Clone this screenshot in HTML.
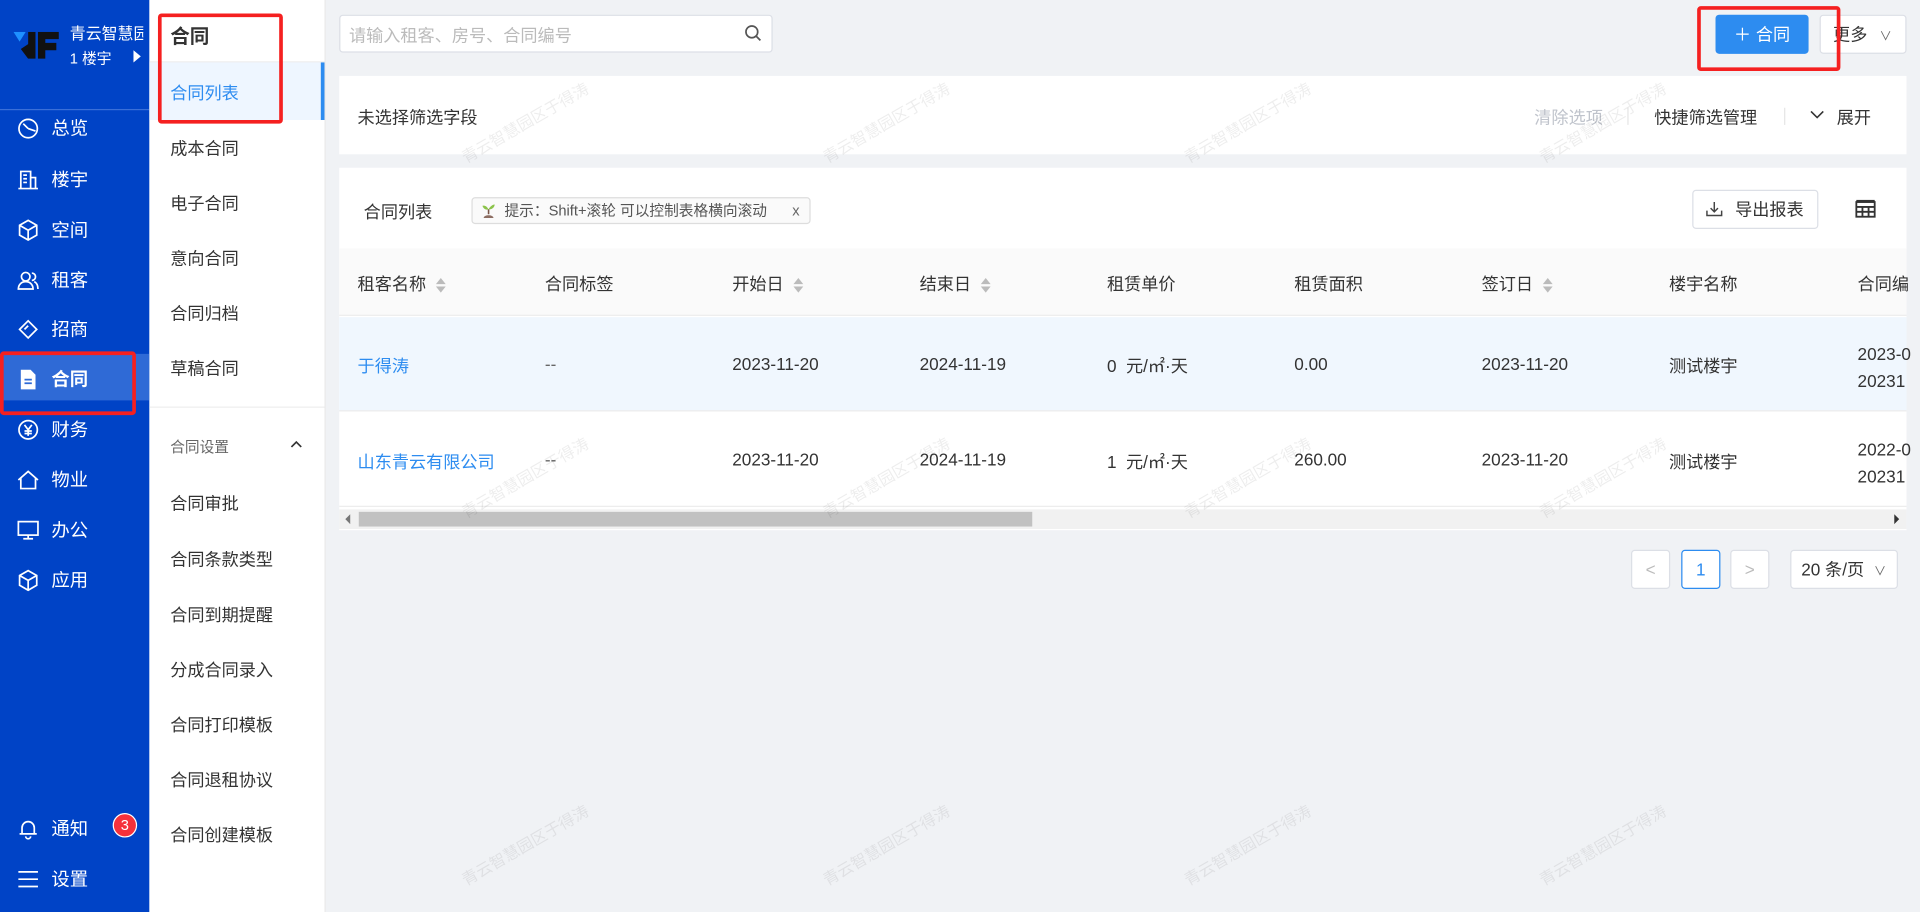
<!DOCTYPE html>
<html><head><meta charset="utf-8"><style>
*{box-sizing:border-box;margin:0;padding:0}
html,body{width:1920px;height:912px;overflow:hidden;background:#f0f2f5}
body{font-family:"Liberation Sans","Noto Sans CJK SC",sans-serif;color:#333}
#w{position:absolute;left:0;top:0;width:1568px;height:745px;transform:scale(1.22449);transform-origin:0 0;font-size:14px}
.a{position:absolute}
.side{left:0;top:0;width:122px;height:745px;background:#0043c6;color:#fff}
.mi{position:absolute;left:14px;font-size:15px;display:flex;align-items:center;gap:10px}
.mi svg{width:18px;height:18px}
.sub{left:122px;top:0;width:144px;height:745px;background:#fff;border-right:1px solid #e8e8e8}
.si{position:absolute;left:17px;font-size:14px;color:#333}
.card{background:#fff}
.th{position:absolute;top:222px;font-size:14px;color:#333}
.td{position:absolute;font-size:14px;color:#333}
.sort{display:inline-block;vertical-align:middle;margin-left:8px;width:8px;height:12px;position:relative}
.sort:before,.sort:after{content:"";position:absolute;left:0;border-left:4px solid transparent;border-right:4px solid transparent}
.sort:before{top:0;border-bottom:5px solid #bbb}
.sort:after{bottom:0;border-top:5px solid #bbb}
.red{position:absolute;border:3px solid #f52020;border-radius:3px}
.wm{position:absolute;color:rgba(0,0,0,0.07);font-size:13px;transform:rotate(-30deg);white-space:nowrap}
.pg{position:absolute;top:449px;height:32px;border:1px solid #dcdfe6;border-radius:3px;background:#fff;display:flex;align-items:center;justify-content:center;color:#bbb}
</style></head><body><div id="w">
<div class="a side">
  <svg class="a" style="left:11px;top:26px" width="38" height="22" viewBox="0 0 38 22"><path d="M0 0h10l-5 8z" fill="#1e90ff"/><path d="M12 0h6v22h-6l-6-8 6-4z" fill="#111"/><path d="M20 0h17v6h-11v3h9v6h-9v7h-6z" fill="#111"/></svg>
  <div class="a" style="left:57px;top:17px;font-size:13px;white-space:nowrap;width:60px;overflow:hidden">青云智慧园</div>
  <div class="a" style="left:57px;top:39px;font-size:12px">1 楼宇</div>
  <div class="a" style="left:109px;top:41px;border-left:6px solid #fff;border-top:5px solid transparent;border-bottom:5px solid transparent"></div>
  <div class="a" style="left:0;top:89px;width:122px;height:1px;background:#3a6fd8"></div>
  <div class="a" style="left:0;top:289px;width:122px;height:38px;background:#2f6ad6"></div>
  <div class="mi" style="top:94px"><svg viewBox="0 0 18 18" fill="none" stroke="#fff" stroke-width="1.4"><circle cx="9" cy="9" r="7.5"/><path d="M9 9l-4-4M9 9l6 2"/></svg>总览</div>
  <div class="mi" style="top:136px"><svg viewBox="0 0 18 18" fill="none" stroke="#fff" stroke-width="1.4"><path d="M3 16V2h8v14M11 7h4v9M1 16h16M5 5h3M5 8h3M5 11h3"/></svg>楼宇</div>
  <div class="mi" style="top:177px"><svg viewBox="0 0 18 18" fill="none" stroke="#fff" stroke-width="1.4"><path d="M9 1l7 4v8l-7 4-7-4V5zM2 5l7 4 7-4M9 9v8"/></svg>空间</div>
  <div class="mi" style="top:218px"><svg viewBox="0 0 18 18" fill="none" stroke="#fff" stroke-width="1.4"><circle cx="7" cy="6" r="3.5"/><path d="M1 16c0-4 3-6 6-6s6 2 6 6zM12 3a3 3 0 010 6M14 10c2 1 3 3 3 6"/></svg>租客</div>
  <div class="mi" style="top:258px"><svg viewBox="0 0 18 18" fill="none" stroke="#fff" stroke-width="1.4"><path d="M2 9l7-7 7 7-7 7zM6 9l3-3"/></svg>招商</div>
  <div class="mi" style="top:299px;font-weight:bold"><svg viewBox="0 0 18 18"><path d="M3 1h8l4 4v12H3z" fill="#fff"/><path d="M6 9h6M6 12h6" stroke="#2f6ad6" stroke-width="1.4"/></svg>合同</div>
  <div class="mi" style="top:340px"><svg viewBox="0 0 18 18" fill="none" stroke="#fff" stroke-width="1.4"><circle cx="9" cy="9" r="7.5"/><path d="M6 5l3 4 3-4M9 9v5M6 10h6M6 12h6"/></svg>财务</div>
  <div class="mi" style="top:381px"><svg viewBox="0 0 18 18" fill="none" stroke="#fff" stroke-width="1.4"><path d="M1 9l8-7 8 7M3 7v9h12V7"/></svg>物业</div>
  <div class="mi" style="top:422px"><svg viewBox="0 0 18 18" fill="none" stroke="#fff" stroke-width="1.4"><rect x="1" y="2" width="16" height="11"/><path d="M5 16h8M9 13v3"/></svg>办公</div>
  <div class="mi" style="top:463px"><svg viewBox="0 0 18 18" fill="none" stroke="#fff" stroke-width="1.4"><path d="M9 1l7 4v8l-7 4-7-4V5zM2 5l7 4 7-4M9 9v8"/></svg>应用</div>
  <div class="mi" style="top:666px"><svg viewBox="0 0 18 18" fill="none" stroke="#fff" stroke-width="1.4"><path d="M4 13V8a5 5 0 0110 0v5h2H2zM7 15a2 2 0 004 0"/></svg>通知</div>
  <div class="a" style="left:92px;top:664px;width:20px;height:20px;border-radius:10px;background:#f5313b;border:1px solid #fff;font-size:12px;text-align:center;line-height:18px">3</div>
  <div class="mi" style="top:707px"><svg viewBox="0 0 18 18" fill="none" stroke="#fff" stroke-width="1.4"><path d="M1 3h16M1 9h16M1 15h16"/></svg>设置</div>
</div>
<div class="a sub">
  <div class="a" style="left:17px;top:16px;font-size:16px;font-weight:bold;color:#333">合同</div>
  <div class="a" style="left:0;top:50px;width:143px;height:1px;background:#eee"></div>
  <div class="a" style="left:0;top:51px;width:143px;height:47px;background:#eef6ff;border-right:3px solid #2d8cf0"></div>
  <div class="si" style="top:66px;color:#2d8cf0">合同列表</div>
  <div class="si" style="top:111px">成本合同</div>
  <div class="si" style="top:156px">电子合同</div>
  <div class="si" style="top:201px">意向合同</div>
  <div class="si" style="top:246px">合同归档</div>
  <div class="si" style="top:291px">草稿合同</div>
  <div class="a" style="left:0;top:332px;width:143px;height:1px;background:#eee"></div>
  <div class="si" style="top:356px;font-size:12px;color:#666">合同设置</div>
  <svg class="a" style="left:115px;top:359px" width="10" height="8" viewBox="0 0 10 8"><path d="M1 6l4-4 4 4" fill="none" stroke="#333" stroke-width="1.4"/></svg>
  <div class="si" style="top:401px">合同审批</div>
  <div class="si" style="top:447px">合同条款类型</div>
  <div class="si" style="top:492px">合同到期提醒</div>
  <div class="si" style="top:537px">分成合同录入</div>
  <div class="si" style="top:582px">合同打印模板</div>
  <div class="si" style="top:627px">合同退租协议</div>
  <div class="si" style="top:672px">合同创建模板</div>
</div>
<!-- top bar -->
<div class="a card" style="left:277px;top:12px;width:354px;height:31px;border:1px solid #dcdfe6;border-radius:3px"></div>
<div class="a" style="left:285px;top:19px;font-size:14px;color:#bbb">请输入租客、房号、合同编号</div>
<svg class="a" style="left:608px;top:20px" width="14" height="14" viewBox="0 0 14 14" fill="none" stroke="#555" stroke-width="1.4"><circle cx="6" cy="6" r="4.8"/><path d="M9.5 9.5l3.5 3.5"/></svg>
<div class="a" style="left:1401px;top:12px;width:76px;height:32px;background:#2d8cf0;border-radius:3px;color:#fff;font-size:14px;line-height:32px;text-align:center">＋ 合同</div>
<div class="a card" style="left:1486px;top:12px;width:71px;height:32px;border:1px solid #dcdfe6;border-radius:3px;font-size:14px;line-height:30px;padding-left:10px">更多 <span style="font-size:10px;color:#666;margin-left:6px">∨</span></div>
<!-- filter -->
<div class="a card" style="left:277px;top:62px;width:1280px;height:64px"></div>
<div class="a" style="left:292px;top:86px">未选择筛选字段</div>
<div class="a" style="left:1253px;top:86px;color:#c0c4cc">清除选项</div>
<div class="a" style="left:1329px;top:88px;width:1px;height:14px;background:#e5e5e5"></div>
<div class="a" style="left:1351px;top:86px">快捷筛选管理</div>
<div class="a" style="left:1457px;top:88px;width:1px;height:14px;background:#e5e5e5"></div>
<svg class="a" style="left:1478px;top:90px" width="12" height="8" viewBox="0 0 12 8"><path d="M1 1l5 5 5-5" fill="none" stroke="#333" stroke-width="1.3"/></svg>
<div class="a" style="left:1500px;top:86px">展开</div>
<!-- table card -->
<div class="a card" style="left:277px;top:137px;width:1280px;height:296px"></div>
<div class="a" style="left:297px;top:163px">合同列表</div>
<div class="a" style="left:385px;top:161px;width:277px;height:22px;border:1px solid #ddd;border-radius:3px;background:#fafafa;font-size:12px;line-height:20px;padding-left:26px;color:#555">提示：Shift+滚轮 可以控制表格横向滚动<span style="position:absolute;right:8px;color:#666">x</span></div>
<svg class="a" style="left:393px;top:165px" width="12" height="13" viewBox="0 0 12 13"><path d="M6 6C4 2 1 3 1 3s1 4 5 3zM6 6c2-4 5-4 5-4s0 4-5 4z" fill="#8bc34a"/><path d="M6 6v4" stroke="#795548" stroke-width="1.3"/><path d="M2 13c0-3 8-3 8 0z" fill="#8d6e63"/></svg>
<div class="a" style="left:1382px;top:155px;width:103px;height:32px;border:1px solid #dcdfe6;border-radius:3px;line-height:30px;padding-left:34px">导出报表</div>
<svg class="a" style="left:1393px;top:164px" width="14" height="13" viewBox="0 0 14 13" fill="none" stroke="#444" stroke-width="1.2"><path d="M7 1v8M4 6l3 3 3-3M1 8v4h12V8"/></svg>
<svg class="a" style="left:1515px;top:163px" width="17" height="15" viewBox="0 0 17 15" fill="none" stroke="#333" stroke-width="1.5"><rect x="1" y="2" width="15" height="12"/><path d="M1 1h15M1 6h15M1 10h15M6 6v8M11 6v8"/></svg>
<div class="a" style="left:277px;top:203px;width:1280px;height:55px;background:#fafafa;border-bottom:1px solid #ececec"></div>
<div class="th" style="left:292px">租客名称<span class="sort"></span></div>
<div class="th" style="left:445px">合同标签</div>
<div class="th" style="left:598px">开始日<span class="sort"></span></div>
<div class="th" style="left:751px">结束日<span class="sort"></span></div>
<div class="th" style="left:904px">租赁单价</div>
<div class="th" style="left:1057px">租赁面积</div>
<div class="th" style="left:1210px">签订日<span class="sort"></span></div>
<div class="th" style="left:1363px">楼宇名称</div>
<div class="th" style="left:1517px">合同编</div>
<div class="a" style="left:277px;top:259px;width:1280px;height:77px;background:#f0f7fe;border-bottom:1px solid #ececec"></div>
<div class="a" style="left:277px;top:337px;width:1280px;height:77px;border-bottom:1px solid #ececec"></div>
<div class="td" style="left:292px;top:289px;color:#2d8cf0">于得涛</div>
<div class="td" style="left:445px;top:289px;color:#666">--</div>
<div class="td" style="left:598px;top:289px">2023-11-20</div>
<div class="td" style="left:751px;top:289px">2024-11-19</div>
<div class="td" style="left:904px;top:289px">0 &nbsp;元/㎡·天</div>
<div class="td" style="left:1057px;top:289px">0.00</div>
<div class="td" style="left:1210px;top:289px">2023-11-20</div>
<div class="td" style="left:1363px;top:289px">测试楼宇</div>
<div class="td" style="left:1517px;top:278px;line-height:22px">2023-0<br>20231</div>
<div class="td" style="left:292px;top:367px;color:#2d8cf0">山东青云有限公司</div>
<div class="td" style="left:445px;top:367px;color:#666">--</div>
<div class="td" style="left:598px;top:367px">2023-11-20</div>
<div class="td" style="left:751px;top:367px">2024-11-19</div>
<div class="td" style="left:904px;top:367px">1 &nbsp;元/㎡·天</div>
<div class="td" style="left:1057px;top:367px">260.00</div>
<div class="td" style="left:1210px;top:367px">2023-11-20</div>
<div class="td" style="left:1363px;top:367px">测试楼宇</div>
<div class="td" style="left:1517px;top:356px;line-height:22px">2022-0<br>20231</div>
<div class="a" style="left:277px;top:416px;width:1280px;height:16px;background:#f1f1f1"></div>
<div class="a" style="left:293px;top:418px;width:550px;height:12px;background:#c1c1c1"></div>
<div class="a" style="left:282px;top:420px;border-right:4px solid #777;border-top:4px solid transparent;border-bottom:4px solid transparent"></div>
<div class="a" style="left:1547px;top:420px;border-left:4px solid #333;border-top:4px solid transparent;border-bottom:4px solid transparent"></div>
<!-- pagination -->
<div class="pg" style="left:1332px;width:32px">&lt;</div>
<div class="pg" style="left:1373px;width:32px;border-color:#2d8cf0;color:#2d8cf0">1</div>
<div class="pg" style="left:1413px;width:32px">&gt;</div>
<div class="pg" style="left:1462px;width:88px;color:#333;justify-content:flex-start;padding-left:8px">20 条/页 <span style="font-size:10px;color:#666;margin-left:8px">∨</span></div>
<!-- watermarks -->
<div class="wm" style="left:370px;top:90px">青云智慧园区于得涛</div>
<div class="wm" style="left:665px;top:90px">青云智慧园区于得涛</div>
<div class="wm" style="left:960px;top:90px">青云智慧园区于得涛</div>
<div class="wm" style="left:1250px;top:90px">青云智慧园区于得涛</div>
<div class="wm" style="left:370px;top:380px">青云智慧园区于得涛</div>
<div class="wm" style="left:665px;top:380px">青云智慧园区于得涛</div>
<div class="wm" style="left:960px;top:380px">青云智慧园区于得涛</div>
<div class="wm" style="left:1250px;top:380px">青云智慧园区于得涛</div>
<div class="wm" style="left:370px;top:680px">青云智慧园区于得涛</div>
<div class="wm" style="left:665px;top:680px">青云智慧园区于得涛</div>
<div class="wm" style="left:960px;top:680px">青云智慧园区于得涛</div>
<div class="wm" style="left:1250px;top:680px">青云智慧园区于得涛</div>
<!-- red boxes -->
<div class="red" style="left:129px;top:11px;width:102px;height:90px"></div>
<div class="red" style="left:0;top:287px;width:111px;height:52px"></div>
<div class="red" style="left:1386px;top:5px;width:117px;height:53px"></div>
</div></body></html>
